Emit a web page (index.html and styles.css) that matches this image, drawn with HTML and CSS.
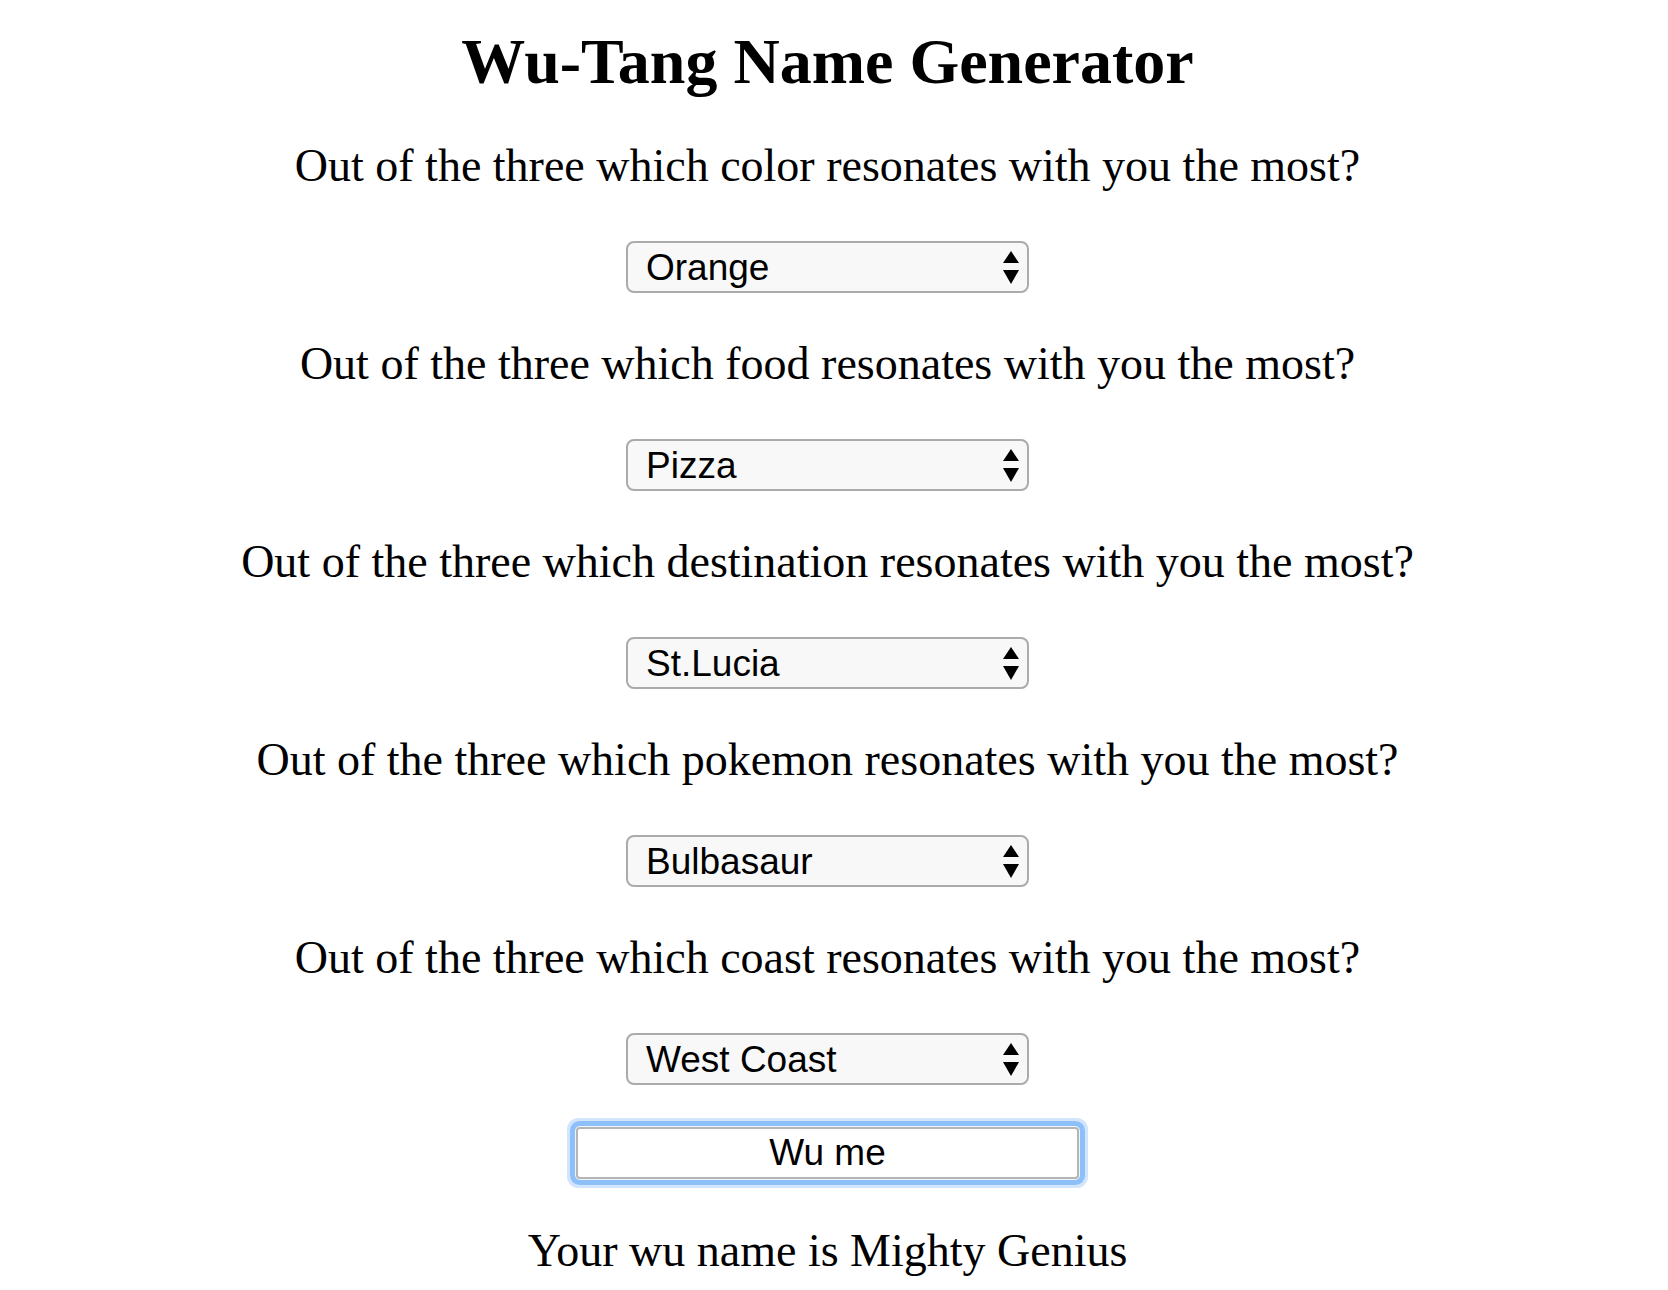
FILE: index.html
```html
<!DOCTYPE html>
<html>
<head>
<meta charset="utf-8">
<title>Wu-Tang Name Generator</title>
<link rel="stylesheet" href="styles.css">
</head>
<body>
<main class="page">
  <h1 class="title">Wu-Tang Name Generator</h1>

  <p class="question">Out of the three which color resonates with you the most?</p>
  <div class="select-wrap">
    <select class="choice"><option>Orange</option><option>Blue</option><option>Green</option></select>
    <svg class="arrows" width="16" height="34" viewBox="0 0 16 34"><path d="M8 0 L16 12 L0 12 Z"/><path d="M0 19 L16 19 L8 33 Z"/></svg>
  </div>

  <p class="question">Out of the three which food resonates with you the most?</p>
  <div class="select-wrap">
    <select class="choice"><option>Pizza</option><option>Tacos</option><option>Sushi</option></select>
    <svg class="arrows" width="16" height="34" viewBox="0 0 16 34"><path d="M8 0 L16 12 L0 12 Z"/><path d="M0 19 L16 19 L8 33 Z"/></svg>
  </div>

  <p class="question">Out of the three which destination resonates with you the most?</p>
  <div class="select-wrap">
    <select class="choice"><option>St.Lucia</option><option>Paris</option><option>Tokyo</option></select>
    <svg class="arrows" width="16" height="34" viewBox="0 0 16 34"><path d="M8 0 L16 12 L0 12 Z"/><path d="M0 19 L16 19 L8 33 Z"/></svg>
  </div>

  <p class="question">Out of the three which pokemon resonates with you the most?</p>
  <div class="select-wrap">
    <select class="choice"><option>Bulbasaur</option><option>Charmander</option><option>Squirtle</option></select>
    <svg class="arrows" width="16" height="34" viewBox="0 0 16 34"><path d="M8 0 L16 12 L0 12 Z"/><path d="M0 19 L16 19 L8 33 Z"/></svg>
  </div>

  <p class="question">Out of the three which coast resonates with you the most?</p>
  <div class="select-wrap">
    <select class="choice"><option>West Coast</option><option>East Coast</option><option>Third Coast</option></select>
    <svg class="arrows" width="16" height="34" viewBox="0 0 16 34"><path d="M8 0 L16 12 L0 12 Z"/><path d="M0 19 L16 19 L8 33 Z"/></svg>
  </div>

  <button class="wu-btn" type="button">Wu me</button>

  <p class="result">Your wu name is Mighty Genius</p>
</main>
</body>
</html>
```

FILE: styles.css
```css
html, body {
  margin: 0;
  padding: 0;
  background: #ffffff;
}

.page {
  display: flex;
  flex-direction: column;
  align-items: center;
  font-family: "Liberation Serif", "Times New Roman", serif;
  color: #000;
  padding-top: 25px;
  padding-right: 13px;
}

.title {
  margin: 0;
  font-size: 64px;
  line-height: 74px;
  font-weight: bold;
}

.question {
  margin: 40px 0 0 0;
  font-size: 46px;
  line-height: 53px;
  font-weight: normal;
}

.question ~ .question {
  margin-top: 44px;
}

.select-wrap {
  position: relative;
  width: 403px;
  height: 52px;
  margin-top: 49px;
}

.choice {
  -webkit-appearance: none;
  appearance: none;
  box-sizing: border-box;
  width: 100%;
  height: 100%;
  margin: 0;
  padding: 0 40px 0 18px;
  border: 2px solid #ababab;
  border-radius: 8px;
  background: #f8f8f8;
  font-family: "Liberation Sans", Arial, sans-serif;
  font-size: 37px;
  color: #000;
}

.arrows {
  position: absolute;
  right: 10px;
  top: 10px;
  fill: #000;
  pointer-events: none;
}

.wu-btn {
  box-sizing: border-box;
  width: 503px;
  height: 52px;
  margin-top: 42px;
  padding: 0;
  border: 2px solid #b5b5b5;
  border-radius: 4px;
  background: #ffffff;
  font-family: "Liberation Sans", Arial, sans-serif;
  font-size: 37px;
  color: #000;
  box-shadow: 0 0 0 1px #eef5fe, 0 0 0 6px #8dc0f8, 0 0 0 9px #d2e5fc;
}

.result {
  margin: 45px 0 0 0;
  font-size: 46px;
  line-height: 53px;
}
```
